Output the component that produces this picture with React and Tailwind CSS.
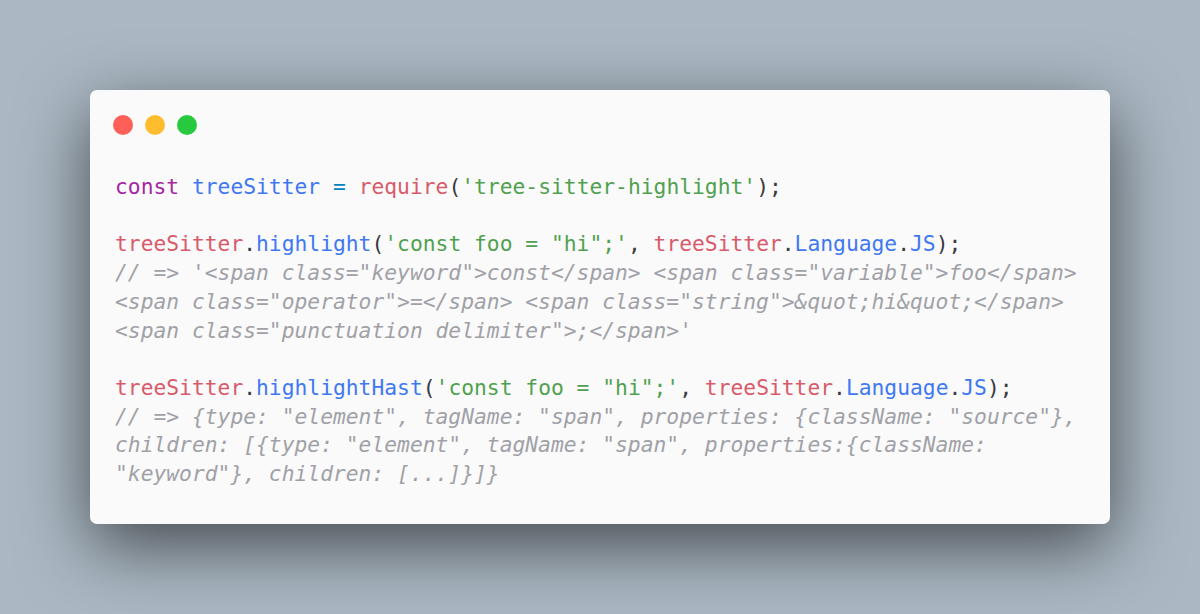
import React from "react";

const C = {
  kw: "text-[#a626a4]",
  fn: "text-[#4078f2]",
  op: "text-[#0184bc]",
  red: "text-[#d85a6b]",
  str: "text-[#50a14f]",
  pun: "text-[#383a42]",
};

function S({ c, children }) {
  return <span className={c}>{children}</span>;
}

function Comment({ children }) {
  return <div className="italic text-[#a0a1a7]">{children}</div>;
}

export default function App() {
  return (
    <div className="min-h-[614px] w-full flex items-center justify-center bg-[#abb8c3]">
      <div className="w-[1020px] h-[434px] bg-[#fafafa] rounded-[7px] shadow-[0_22px_70px_rgba(0,0,0,0.6)] pl-[23px] pr-[20px] pt-[25px] flex flex-col">
        <div className="flex gap-[12px]">
          <div className="w-[20px] h-[20px] rounded-full bg-[#ff5f56]" />
          <div className="w-[20px] h-[20px] rounded-full bg-[#ffbd2e]" />
          <div className="w-[20px] h-[20px] rounded-full bg-[#27c93f]" />
        </div>
        <div
          className="mt-[38px] pl-[2px] whitespace-pre text-[21.3px] leading-[28.7px] text-[#383a42]"
          style={{ fontFamily: '"DejaVu Sans Mono", "Liberation Mono", monospace' }}
        >
          <div>
            <S c={C.kw}>const</S> <S c={C.fn}>treeSitter</S> <S c={C.op}>=</S>{" "}
            <S c={C.red}>require</S>
            <S c={C.pun}>(</S>
            <S c={C.str}>'tree-sitter-highlight'</S>
            <S c={C.pun}>);</S>
          </div>
          <div>{" "}</div>
          <div>
            <S c={C.red}>treeSitter</S>
            <S c={C.pun}>.</S>
            <S c={C.fn}>highlight</S>
            <S c={C.pun}>(</S>
            <S c={C.str}>'const foo = "hi";'</S>
            <S c={C.pun}>, </S>
            <S c={C.red}>treeSitter</S>
            <S c={C.pun}>.</S>
            <S c={C.fn}>Language</S>
            <S c={C.pun}>.</S>
            <S c={C.fn}>JS</S>
            <S c={C.pun}>);</S>
          </div>
          <Comment>{`// => '<span class="keyword">const</span> <span class="variable">foo</span>`}</Comment>
          <Comment>{`<span class="operator">=</span> <span class="string">&quot;hi&quot;</span>`}</Comment>
          <Comment>{`<span class="punctuation delimiter">;</span>'`}</Comment>
          <div>{" "}</div>
          <div>
            <S c={C.red}>treeSitter</S>
            <S c={C.pun}>.</S>
            <S c={C.fn}>highlightHast</S>
            <S c={C.pun}>(</S>
            <S c={C.str}>'const foo = "hi";'</S>
            <S c={C.pun}>, </S>
            <S c={C.red}>treeSitter</S>
            <S c={C.pun}>.</S>
            <S c={C.fn}>Language</S>
            <S c={C.pun}>.</S>
            <S c={C.fn}>JS</S>
            <S c={C.pun}>);</S>
          </div>
          <Comment>{`// => {type: "element", tagName: "span", properties: {className: "source"},`}</Comment>
          <Comment>{`children: [{type: "element", tagName: "span", properties:{className:`}</Comment>
          <Comment>{`"keyword"}, children: [...]}]}`}</Comment>
        </div>
      </div>
    </div>
  );
}
